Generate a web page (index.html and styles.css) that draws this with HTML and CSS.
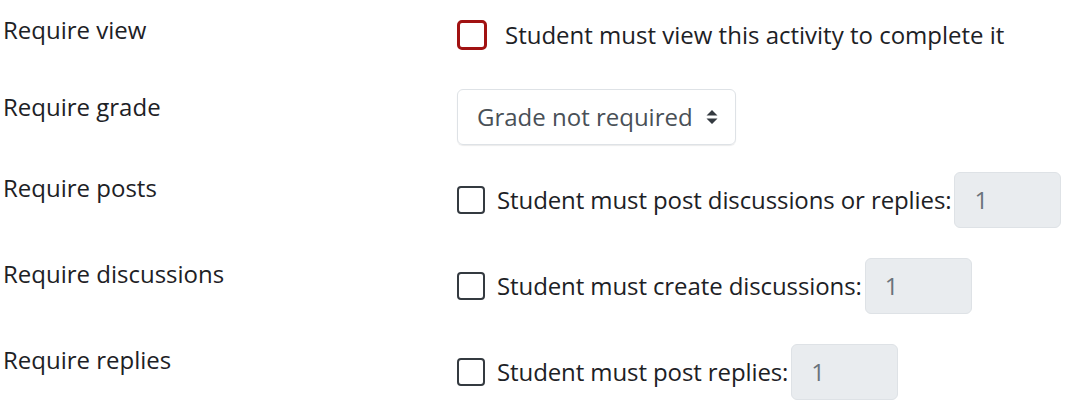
FILE: index.html
```html
<!DOCTYPE html>
<html lang="en">
<head>
<meta charset="utf-8">
<title>Activity completion</title>
<link rel="stylesheet" href="styles.css">
</head>
<body>
<form class="form">
  <div class="row row-view">
    <div class="label">Require view</div>
    <div class="field field-view">
      <label class="check">
        <span class="box box-invalid"></span>
        <span class="check-text check-text-wide">Student must view this activity to complete it</span>
      </label>
    </div>
  </div>
  <div class="row row-grade">
    <div class="label">Require grade</div>
    <div class="field">
      <div class="select">
        <span>Grade not required</span>
        <svg class="caret" width="12" height="16" viewBox="0 0 12 16"><path d="M6 1 L11.5 6.5 H0.5 Z M6 15 L11.5 9.5 H0.5 Z" fill="#343a40"/></svg>
      </div>
    </div>
  </div>
  <div class="row row-num">
    <div class="label">Require posts</div>
    <div class="field">
      <label class="check">
        <span class="box"></span>
        <span class="check-text">Student must post discussions or replies:</span>
      </label>
      <div class="num">1</div>
    </div>
  </div>
  <div class="row row-num">
    <div class="label">Require discussions</div>
    <div class="field">
      <label class="check">
        <span class="box"></span>
        <span class="check-text">Student must create discussions:</span>
      </label>
      <div class="num">1</div>
    </div>
  </div>
  <div class="row row-num">
    <div class="label">Require replies</div>
    <div class="field">
      <label class="check">
        <span class="box"></span>
        <span class="check-text">Student must post replies:</span>
      </label>
      <div class="num">1</div>
    </div>
  </div>
</form>
</body>
</html>
```

FILE: styles.css
```css
html, body {
  margin: 0;
  padding: 0;
  background: #ffffff;
}
body {
  font-family: "Open Sans", "Liberation Sans", sans-serif;
  font-size: 24px;
  line-height: 1.5;
  color: #1d2125;
}
.form {
  padding: 13px 0 0 2px;
}
.row {
  display: flex;
  align-items: flex-start;
}
.label {
  width: 455px;
  flex: none;
  padding-left: 1px;
  box-sizing: border-box;
}
.field {
  display: flex;
  align-items: center;
}
.row-view .label {
  margin-top: -1px;
}
.field-view {
  margin-top: 4px;
}
.row-view {
  height: 76px;
}
.row-grade {
  height: 83px;
}
.row-num {
  height: 86px;
}
.row-num .label {
  margin-top: -2px;
}
.check {
  display: flex;
  align-items: center;
}
.box {
  width: 28px;
  height: 28px;
  box-sizing: border-box;
  border: 2px solid #343a40;
  border-radius: 4px;
  flex: none;
}
.box-invalid {
  width: 30px;
  height: 30px;
  border: 3px solid #a11212;
  border-radius: 5px;
}
.check-text {
  margin-left: 12px;
  letter-spacing: -0.1px;
}
.check-text-wide {
  margin-left: 18px;
  letter-spacing: 0;
}
.select {
  width: 279px;
  height: 56px;
  box-sizing: border-box;
  border: 1px solid #dee2e6;
  border-radius: 6px;
  box-shadow: 0 1px 1px rgba(0, 0, 0, 0.08);
  padding: 0 17px 0 19px;
  display: flex;
  align-items: center;
  justify-content: space-between;
  color: #495057;
}
.num {
  width: 107px;
  height: 56px;
  box-sizing: border-box;
  margin-left: 3px;
  border: 1px solid #dee2e6;
  border-radius: 6px;
  background: #e9ecef;
  color: #6a737b;
  padding-left: 19px;
  display: flex;
  align-items: center;
}
```
